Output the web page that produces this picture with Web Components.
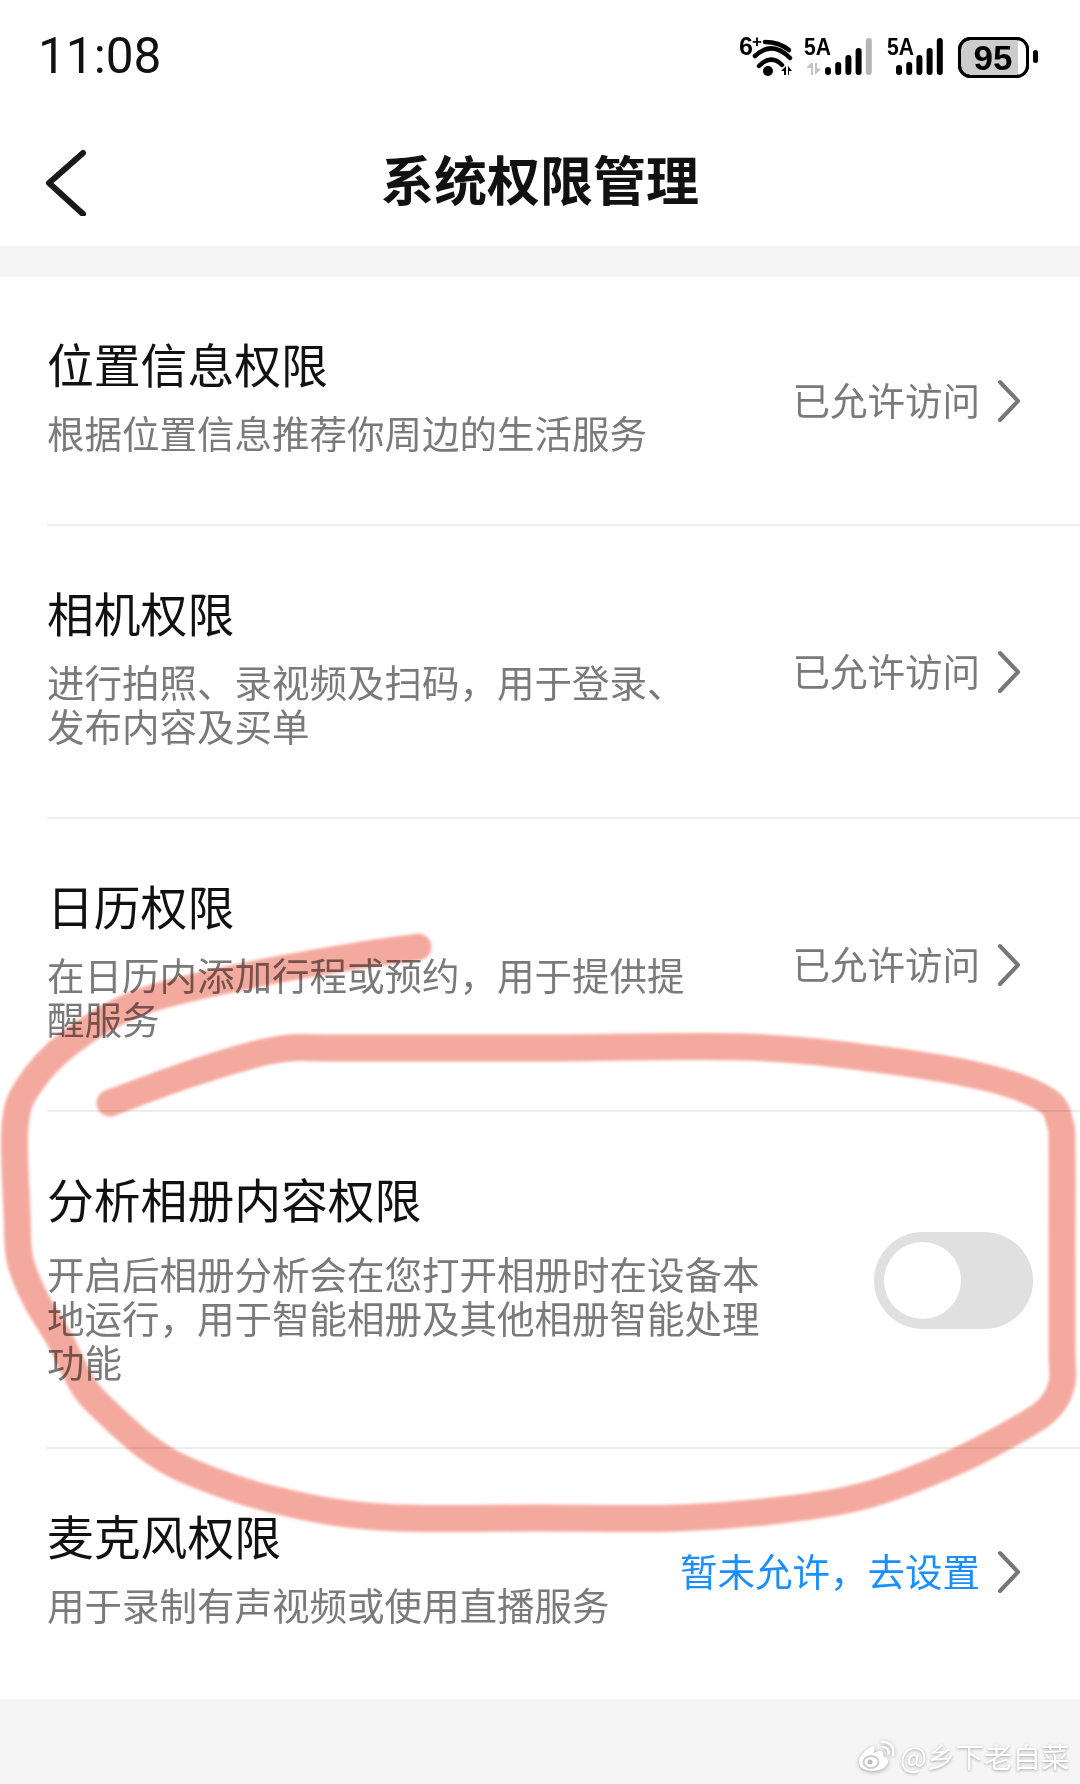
<!DOCTYPE html>
<html lang="zh-CN">
<head>
<meta charset="utf-8" />
<title>系统权限管理</title>
<style>
  html, body { margin: 0; padding: 0; }
  body {
    position: relative;
    width: 1080px;
    height: 1784px;
    overflow: hidden;
    background: #f5f5f5;
    font-family: "Noto Sans CJK SC", "Liberation Sans", sans-serif;
  }
</style>
</head>
<body>
<status-bar></status-bar>
<nav-bar>系统权限管理</nav-bar>
<section style="display:block;margin-top:31px;background:#fff">
  <permission-row>
    <span slot="title">位置信息权限</span>
    <span slot="desc">根据位置信息推荐你周边的生活服务</span>
    <perm-link>已允许访问</perm-link>
  </permission-row>
  <permission-row>
    <span slot="title">相机权限</span>
    <span slot="desc">进行拍照、录视频及扫码，用于登录、<br>发布内容及买单</span>
    <perm-link>已允许访问</perm-link>
  </permission-row>
  <permission-row>
    <span slot="title">日历权限</span>
    <span slot="desc">在日历内添加行程或预约，用于提供提<br>醒服务</span>
    <perm-link>已允许访问</perm-link>
  </permission-row>
  <permission-row style="--title-gap:25px;--pad-bottom:64px;--pad-right:47px">
    <span slot="title">分析相册内容权限</span>
    <span slot="desc">开启后相册分析会在您打开相册时在设备本<br>地运行，用于智能相册及其他相册智能处理<br>功能</span>
    <switch-toggle></switch-toggle>
  </permission-row>
  <permission-row last style="--pad-bottom:69px">
    <span slot="title">麦克风权限</span>
    <span slot="desc">用于录制有声视频或使用直播服务</span>
    <perm-link accent>暂未允许，去设置</perm-link>
  </permission-row>
</section>
<ink-scribble></ink-scribble>
<watermark-tag>@乡下老自菜</watermark-tag>

<script>
  function define(name, html, init) {
    customElements.define(name, class extends HTMLElement {
      constructor() {
        super();
        this.attachShadow({ mode: "open" }).innerHTML = html;
      }
      connectedCallback() {
        if (init) init(this);
      }
    });
  }

  const bars = (x, tops, grayLast) => tops.map((t, i) =>
    `<rect x="${x + i * 10.2}" y="${t}" width="6" height="${75 - t}" rx="3" fill="${grayLast && i === tops.length - 1 ? "#b4b4b4" : "#000"}"/>`
  ).join("");

  define("status-bar", `
    <style>
      :host { display: flex; justify-content: space-between; align-items: flex-start; height: 100px; background: #fff; }
      .time { font: 400 49.5px/56px Roboto, sans-serif; color: #111; margin: 28px 0 0 38px; }
      svg { display: block; margin: 27px 30px 0 0; }
      text { font-family: "Liberation Sans", sans-serif; font-weight: 700; }
    </style>
    <div class="time">11:08</div>
    <svg width="310" height="60" viewBox="740 27 310 60">
      <text x="739" y="55" font-size="25">6</text>
      <text x="752" y="47" font-size="17">+</text>
      <g fill="none" stroke="#000" stroke-width="4.5" stroke-linecap="round">
        <path d="M765 42 Q779 42 789 50"/>
        <path d="M755 56 Q772 40 790 58"/>
        <path d="M759 66 Q771 54 782 65"/>
      </g>
      <circle cx="768" cy="71" r="5"/>
      <path d="M781 71 L786 66 V75 H784 V71 Z M788 66 L792 71 H789 V75 H788 Z"/>
      <text x="804" y="55" font-size="24" textLength="27" lengthAdjust="spacingAndGlyphs">5A</text>
      <path fill="#c4c4c4" d="M811 63 V75 H813 V63 Z M815 63 H817 V68 L821 69 L815 75 Z M807 67 L811 63 V68 H807 Z"/>
      ${bars(825, [67, 62, 55, 48, 38], true)}
      <text x="887" y="55" font-size="24" textLength="27" lengthAdjust="spacingAndGlyphs">5A</text>
      ${bars(896, [65, 62, 55, 48, 38], false)}
      <rect x="959.5" y="38.5" width="68" height="38" rx="11" fill="#ccc" stroke="#000" stroke-width="3"/>
      <path d="M1022 40 h-4 V75 h4 a4 4 0 0 0 4 -4 V44 a4 4 0 0 0 -4 -4 Z" fill="#fff"/>
      <rect x="959.5" y="38.5" width="68" height="38" rx="11" fill="none" stroke="#000" stroke-width="3"/>
      <text x="993" y="70" font-size="35" text-anchor="middle">95</text>
      <rect x="1033" y="50" width="5" height="13" rx="2.5"/>
    </svg>`);

  define("nav-bar", `
    <style>
      :host { display: flex; position: relative; justify-content: center; align-items: center; height: 146px; background: #fff; }
      .title { font-size: 53px; font-weight: 700; color: #111; line-height: 66px; margin-top: 10px; }
      svg { position: absolute; left: 40px; top: 44px; }
    </style>
    <svg width="52" height="72" viewBox="0 0 52 72" fill="none" stroke="#1a1a1a" stroke-width="6" stroke-linecap="round" stroke-linejoin="round">
      <path d="M43 9 L9 39 L43 70"/>
    </svg>
    <div class="title"><slot></slot></div>`);

  define("permission-row", `
    <style>
      :host { display: block; background: #fff; }
      .row {
        display: flex; justify-content: space-between; align-items: center;
        margin-left: 47px; padding-right: var(--pad-right, 59px);
        border-bottom: 2px solid #eee;
      }
      /* last row has no divider, and its value sits a little higher than centre */
      :host([last]) .row { border-bottom: 0; padding-bottom: 4px; }
      .text { padding: 58px 0 var(--pad-bottom, 70px); }
      .title { font-size: 46.8px; line-height: 56px; color: #111; margin-bottom: var(--title-gap, 19px); }
      .desc { font-size: 37.5px; line-height: 44px; color: #7a7a7a; }
    </style>
    <div class="row">
      <div class="text">
        <div class="title"><slot name="title"></slot></div>
        <div class="desc"><slot name="desc"></slot></div>
      </div>
      <slot></slot>
    </div>`);

  define("perm-link", `
    <style>
      :host { display: flex; align-items: center; gap: 17px; font-size: 37.5px; line-height: 44px; color: #7a7a7a; }
      :host([accent]) { color: #1a8fff; }
      span { margin-bottom: 4px; }
      svg { display: block; }
    </style>
    <span><slot></slot></span>
    <svg width="24" height="44" viewBox="0 0 24 44" fill="none" stroke="#777" stroke-width="4" stroke-linecap="round" stroke-linejoin="round">
      <path d="M3 3 L21 22 L3 41"/>
    </svg>`);

  define("switch-toggle", `
    <style>
      :host { display: block; width: 159px; height: 97px; margin-top: 2px; padding: 10px; box-sizing: border-box; border-radius: 49px; background: #e0e0e0; }
      .knob { width: 77px; height: 77px; border-radius: 50%; background: #fff; }
    </style>
    <div class="knob"></div>`);

  // freehand circle over the screenshot, points traced from the reference
  const inkPoints = [
    [418,947],[344,958],[241,977],[138,1003],[69,1043],[28,1087],[15,1127],[17,1213],[20,1260],
    [36,1300],[60,1340],[84,1387],[108,1413],[148,1448],[193,1473],[275,1500],[379,1517],[540,1518],[678,1518],
    [781,1510],[867,1495],[953,1463],[1022,1427],[1050,1407],[1062,1383],[1062,1350],[1062,1250],[1062,1150],[1060,1123],
    [1046,1100],[988,1078],[884,1060],[747,1047],[540,1048],[344,1048],[275,1050],[193,1073],[110,1103]
  ];

  function smoothPath(pts) {
    let d = `M${pts[0][0]} ${pts[0][1]}`;
    for (let i = 0; i < pts.length - 1; i++) {
      const p0 = pts[i - 1] || pts[i], p1 = pts[i], p2 = pts[i + 1], p3 = pts[i + 2] || p2;
      const c1 = [p1[0] + (p2[0] - p0[0]) / 6, p1[1] + (p2[1] - p0[1]) / 6];
      const c2 = [p2[0] - (p3[0] - p1[0]) / 6, p2[1] - (p3[1] - p1[1]) / 6];
      d += ` C${c1[0]} ${c1[1]} ${c2[0]} ${c2[1]} ${p2[0]} ${p2[1]}`;
    }
    return d;
  }

  define("ink-scribble", `
    <style>
      :host { position: absolute; left: 0; top: 0; width: 1080px; height: 1784px; pointer-events: none; mix-blend-mode: multiply; }
      svg { display: block; }
    </style>
    <svg width="1080" height="1784" viewBox="0 0 1080 1784">
      <defs><filter id="soft" x="-5%" y="-5%" width="110%" height="110%"><feGaussianBlur stdDeviation="1.5"/></filter></defs>
      <path id="ink" fill="none" stroke="#f4a99f" stroke-width="27" stroke-linecap="round" stroke-linejoin="round" filter="url(#soft)"/>
    </svg>`, el => {
    el.shadowRoot.getElementById("ink").setAttribute("d", smoothPath(inkPoints));
  });

  define("watermark-tag", `
    <style>
      :host {
        position: absolute; left: 858px; top: 1736px;
        display: flex; align-items: center; gap: 4px;
        font-size: 28.5px; line-height: 40px; color: #fff;
        text-shadow: 0 1px 3px rgba(0,0,0,.35);
        white-space: nowrap;
      }
      svg { display: block; filter: drop-shadow(0 1px 2px rgba(0,0,0,.35)); }
    </style>
    <svg width="38" height="32" viewBox="0 0 38 32">
      <path fill="#fff" d="M15 6 C8 9 1 16 1 22 C1 28 8 31 15 31 C23 31 30 27 30 21 C30 18 27 17 25 16 C26 13 25 11 22 11 C20 11 18 12 16 13 C17 9 17 6 15 6 Z"/>
      <ellipse cx="13" cy="22" rx="7.5" ry="6" fill="none" stroke="#ccc" stroke-width="2"/>
      <circle cx="12" cy="22" r="2.5" fill="#bbb"/>
      <path fill="none" stroke="#fff" stroke-width="2.2" stroke-linecap="round" d="M24 2 C31 1 37 7 35 15 M25 7 C29 7 31 10 30.500 13"/>
    </svg>
    <span><slot></slot></span>`);
</script>
</body>
</html>
